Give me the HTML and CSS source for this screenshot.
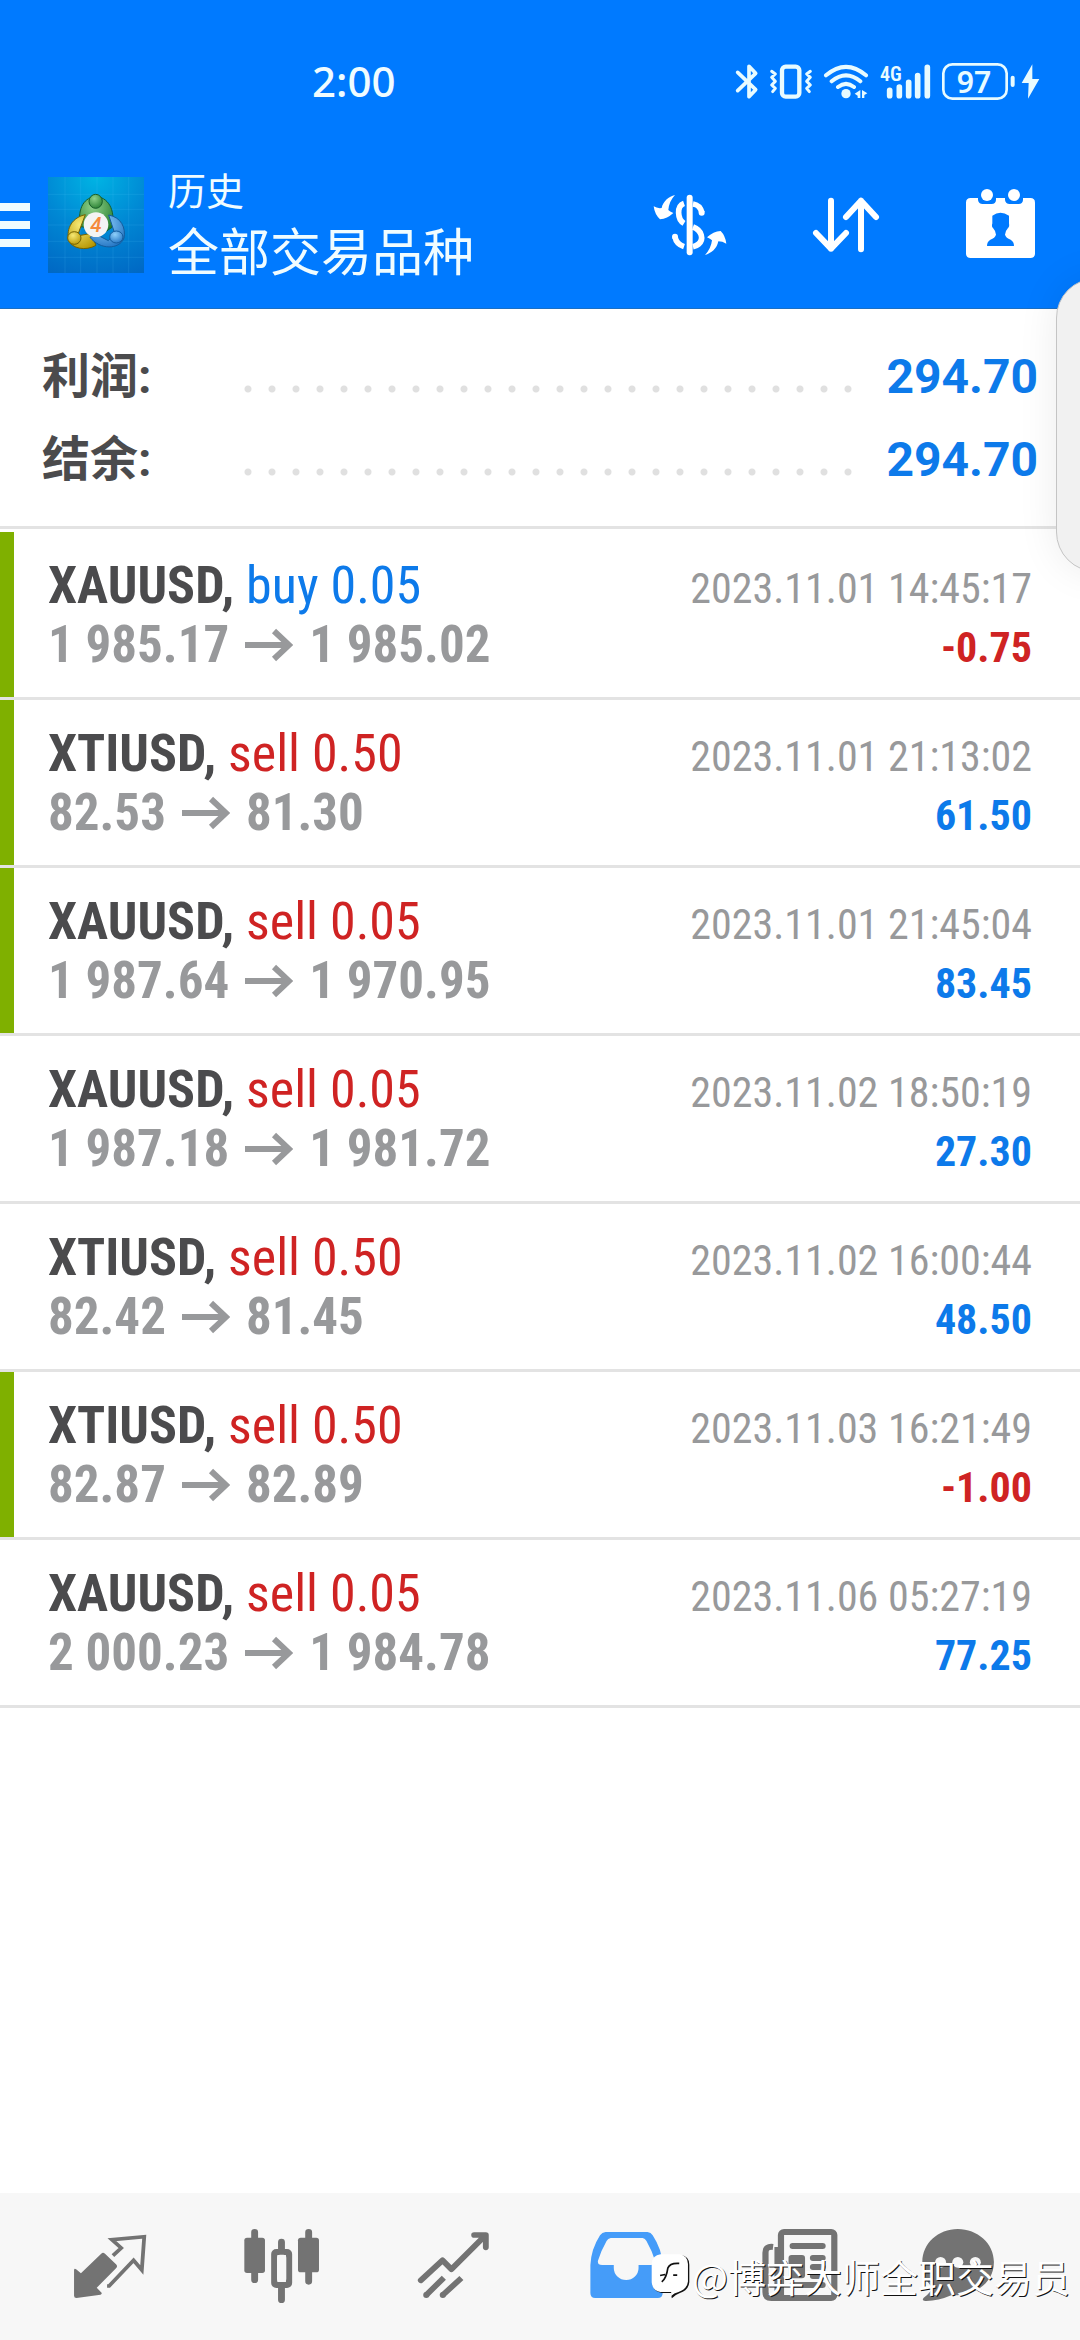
FILE: index.html
```
<!DOCTYPE html>
<html lang="zh-CN">
<head>
<meta charset="utf-8">
<meta name="viewport" content="width=device-width, initial-scale=1">
<title>历史</title>
<link rel="stylesheet" href="styles.css">
</head>
<body>
<svg width="0" height="0" class="defs" aria-hidden="true">
  <symbol id="arrow" viewBox="0 0 48 34"><path d="M0 17H43M29 3L44 17L29 31" fill="none" stroke="currentColor" stroke-width="6"/></symbol>
</svg>
<div class="screen">
  <header class="top">
    <div class="status">
      <span class="clock">2:00</span>
      <svg class="status-icons" viewBox="96 60 930 120" aria-hidden="true">
        <g fill="none" stroke="#e8fbff" stroke-width="11" stroke-linecap="round" stroke-linejoin="round">
          <path d="M113 94L167 146L147 167V76L167 97L113 149"/>
          <rect x="246" y="77" width="52" height="90" rx="11" stroke-width="13"/>
          <path d="M215 91L226 99L215 109L226 121L215 132L226 142L218 152M331 91L320 99L331 109L320 121L331 132L320 142L328 152" stroke-width="9"/>
          <path d="M378 103Q438 52 498 103M395 121Q438 85 481 121M414 138Q438 119 462 138" stroke-width="12"/>
          <path d="M569 148V164M598 138V164M626 124V164M653 104V164M682 79V164" stroke-width="17"/>
          <rect x="730" y="70" width="190" height="103" rx="27" stroke-width="8"/>
          <path d="M938 110V132" stroke-width="12"/>
        </g>
        <g fill="#e8fbff">
          <circle cx="438" cy="158" r="14"/>
          <path d="M481 147V171H473V164L464 158ZM486 147L502 157L493 162V171H486Z"/>
          <path d="M997 70L965 126H986L984 173L1018 114H997Z"/>
          <text x="540" y="119" class="net">4G</text>
          <text x="822" y="156" class="level">97</text>
        </g>
      </svg>
    </div>
    <div class="appbar">
      <button class="menu" aria-label="菜单"><i></i><i></i><i></i></button>
      <svg class="logo" viewBox="24 21 288 288" aria-hidden="true">
        <defs>
          <radialGradient id="sky" cx=".5" cy="0" r="1.1"><stop offset="0" stop-color="#00b4e4"/><stop offset=".5" stop-color="#0088d4"/><stop offset="1" stop-color="#0068c4"/></radialGradient>
          <radialGradient id="gr" cx=".4" cy=".3" r=".8"><stop offset="0" stop-color="#8fd18a"/><stop offset="1" stop-color="#217a2c"/></radialGradient>
          <radialGradient id="ye" cx=".4" cy=".3" r=".8"><stop offset="0" stop-color="#f5e873"/><stop offset="1" stop-color="#b49400"/></radialGradient>
          <radialGradient id="bl" cx=".4" cy=".3" r=".8"><stop offset="0" stop-color="#8fd0fb"/><stop offset="1" stop-color="#1c6fc0"/></radialGradient>
        </defs>
        <rect x="24" y="21" width="288" height="288" fill="url(#sky)"/>
        <path d="M24 73H312M24 118H312M24 165H312M24 214H312M24 262H312M75 21V309M122 21V309M171 21V309M219 21V309M266 21V309" stroke="#5cc8ff" stroke-opacity=".22" stroke-width="2"/>
        <g stroke-width="3">
          <path d="M120 170C112 110 135 82 167 80C202 80 228 118 216 172L198 184L186 135L150 135L138 172Z" fill="url(#gr)" stroke="#185f2b"/>
          <path d="M136 134C98 142 78 174 86 210C94 236 138 244 168 226L154 190L112 198Z" fill="url(#ye)" stroke="#746200"/>
          <path d="M206 135C244 142 258 174 252 204C238 240 180 240 150 202L168 193L205 212L224 190Z" fill="url(#bl)" stroke="#145c9d"/>
          <ellipse cx="167" cy="94" rx="20" ry="21" fill="url(#gr)" stroke="#185f2b"/>
          <ellipse cx="103" cy="204" rx="20" ry="19" fill="url(#ye)" stroke="#746200"/>
          <ellipse cx="229" cy="201" rx="20" ry="18" fill="url(#bl)" stroke="#145c9d"/>
        </g>
        <circle cx="168" cy="164" r="37" fill="#f4f4f4"/>
        <text x="168" y="186" class="four">4</text>
      </svg>
      <div class="titles">
        <h1>历史</h1>
        <p>全部交易品种</p>
      </div>
      <div class="actions">
        <button aria-label="货币"><svg viewBox="66 51 288 288">
          <path d="M209 113V277" stroke="#fff" stroke-width="18" stroke-linecap="round" fill="none"/>
          <path d="M192 130C169 138 172 178 192 190M219 132C233 134 241 140 246 158M165 231C168 246 177 255 192 260M219 201C246 211 252 238 236 252Q229 258 219 260" stroke="#fff" stroke-width="17" fill="none"/>
          <circle cx="245" cy="158" r="9" fill="#fff"/><circle cx="165" cy="230" r="9" fill="#fff"/>
          <path d="M165 105C146 110 129 124 125 144Q112 146 101 139Q104 163 120 178Q142 176 160 159Q149 155 145 150Q147 124 165 105Z" fill="#fff"/>
          <path d="M255 285C274 280 291 266 295 244Q307 244 319 251Q316 227 302 213Q280 214 261 232Q271 236 276 241Q273 266 255 285Z" fill="#fff"/>
        </svg></button>
        <button aria-label="排序"><svg viewBox="531 51 288 288">
          <path d="M633 122V266M588 219L633 266L678 219M723 268V122M678 171L723 122L768 171" fill="none" stroke="#fff" stroke-width="18" stroke-linecap="round" stroke-linejoin="round"/>
        </svg></button>
        <button aria-label="日期"><svg viewBox="996 51 288 288">
          <path d="M1052 114H1074V120Q1076 132 1088 132H1115Q1127 132 1128 120V114H1155V120Q1157 132 1169 132H1196Q1208 132 1209 120V114H1231Q1245 114 1245 128V280Q1245 294 1231 294H1052Q1038 294 1038 280V128Q1038 114 1052 114Z" fill="#fff"/>
          <circle cx="1101" cy="105" r="18" fill="#fff"/><circle cx="1182" cy="105" r="18" fill="#fff"/>
          <path d="M1117 167Q1141 150 1167 167V190Q1169 201 1164 204Q1155 214 1155 224Q1158 234 1172 239Q1182 245 1182 258H1101Q1101 245 1111 239Q1125 234 1128 224Q1128 214 1119 204Q1114 201 1117 190Z" fill="#007aff"/>
        </svg></button>
      </div>
    </div>
  </header>

  <main>
    <dl class="summary">
      <div><dt>利润:</dt><dd class="dots"></dd><dd class="total">294.70</dd></div>
      <div><dt>结余:</dt><dd class="dots"></dd><dd class="total">294.70</dd></div>
    </dl>
    <ul class="deals">
      <li class="marked"><p class="deal"><b>XAUUSD,</b> <span class="buy">buy 0.05</span></p><time>2023.11.01 14:45:17</time>
        <p class="prices">1 985.17<svg><use href="#arrow"/></svg>1 985.02</p><p class="result sell">-0.75</p></li>
      <li class="marked"><p class="deal"><b>XTIUSD,</b> <span class="sell">sell 0.50</span></p><time>2023.11.01 21:13:02</time>
        <p class="prices">82.53<svg><use href="#arrow"/></svg>81.30</p><p class="result buy">61.50</p></li>
      <li class="marked"><p class="deal"><b>XAUUSD,</b> <span class="sell">sell 0.05</span></p><time>2023.11.01 21:45:04</time>
        <p class="prices">1 987.64<svg><use href="#arrow"/></svg>1 970.95</p><p class="result buy">83.45</p></li>
      <li><p class="deal"><b>XAUUSD,</b> <span class="sell">sell 0.05</span></p><time>2023.11.02 18:50:19</time>
        <p class="prices">1 987.18<svg><use href="#arrow"/></svg>1 981.72</p><p class="result buy">27.30</p></li>
      <li><p class="deal"><b>XTIUSD,</b> <span class="sell">sell 0.50</span></p><time>2023.11.02 16:00:44</time>
        <p class="prices">82.42<svg><use href="#arrow"/></svg>81.45</p><p class="result buy">48.50</p></li>
      <li class="marked"><p class="deal"><b>XTIUSD,</b> <span class="sell">sell 0.50</span></p><time>2023.11.03 16:21:49</time>
        <p class="prices">82.87<svg><use href="#arrow"/></svg>82.89</p><p class="result sell">-1.00</p></li>
      <li><p class="deal"><b>XAUUSD,</b> <span class="sell">sell 0.05</span></p><time>2023.11.06 05:27:19</time>
        <p class="prices">2 000.23<svg><use href="#arrow"/></svg>1 984.78</p><p class="result buy">77.25</p></li>
    </ul>
  </main>

  <nav class="tabs">
    <button aria-label="行情"><svg viewBox="180 84 279 288" preserveAspectRatio="none">
      <path d="M328 197L352 174L325 149L419 140L412 240L388 211L317 288H311" fill="none" stroke="#737373" stroke-width="11"/>
      <path d="M294 191Q299 186 305 191L337 223Q343 229 337 235L281 293L295 308Q297 312 292 314L222 324Q215 324 215 317V240Q216 234 221 238L235 250Z" fill="#737373"/>
    </svg></button>
    <button aria-label="图表"><svg viewBox="679 84 279 288" preserveAspectRatio="none">
      <path d="M739 127V269M817 156V190M817 290V329M896 127V274" stroke="#737373" stroke-width="20" stroke-linecap="round"/>
      <rect x="709" y="143" width="60" height="106" rx="8" fill="#737373"/><rect x="865" y="143" width="61" height="104" rx="8" fill="#737373"/>
      <rect x="796" y="186" width="43" height="99" rx="6" fill="#f7f7f7" stroke="#737373" stroke-width="18"/>
      <rect x="804" y="194" width="27" height="82" rx="9" fill="#f7f7f7"/>
    </svg></button>
    <button aria-label="交易"><svg viewBox="1179 84 279 288" preserveAspectRatio="none">
      <path d="M1222 271L1285 211L1311 238L1410 136M1377 135H1411V172" fill="none" stroke="#737373" stroke-width="17" stroke-linecap="round" stroke-linejoin="round"/>
      <path d="M1238 315L1289 263M1286 315L1340 264" fill="none" stroke="#737373" stroke-width="17"/>
      <circle cx="1238" cy="315" r="9" fill="#737373"/><circle cx="1286" cy="315" r="9" fill="#737373"/>
    </svg></button>
    <button aria-label="历史" aria-current="page"><svg viewBox="110 84 279 288" preserveAspectRatio="none">
      <path fill-rule="evenodd" d="M190 126H312Q322 127 327 136Q354 178 356 225V309Q356 324 342 324H160Q146 324 146 309V225Q148 178 174 136Q180 127 190 126ZM205 144Q197 145 193 153Q177 182 168 212Q166 225 180 225H214V234A36 36 0 0 0 286 234V225H322Q336 225 334 212Q325 182 309 153Q305 145 298 144Z" fill="#459cf9"/>
    </svg></button>
    <button aria-label="新闻"><svg viewBox="610 84 279 288" preserveAspectRatio="none">
      <rect x="700" y="126" width="155" height="198" rx="9" fill="none" stroke="#737373" stroke-width="18"/>
      <path d="M677 171Q655 168 655 188V306Q655 324 672 324H700Q690 318 690 306V171" fill="none" stroke="#737373" stroke-width="18"/>
      <path d="M734 168H821M793 204H821M793 231H821M793 258H821M734 285H821" stroke="#737373" stroke-width="18" stroke-linecap="round"/>
      <rect x="722" y="195" width="48" height="70" rx="9" fill="#737373"/>
    </svg></button>
    <button aria-label="消息"><svg viewBox="1109 84 279 288" preserveAspectRatio="none">
      <path d="M1213 117C1270 117 1318 160 1318 216C1318 282 1260 318 1194 316Q1154 334 1118 333Q1107 331 1114 323Q1136 308 1138 292Q1110 262 1110 216C1110 160 1156 117 1213 117Z" fill="#737373"/>
      <circle cx="1163" cy="217" r="16" fill="#f7f7f7"/><circle cx="1213" cy="217" r="16" fill="#f7f7f7"/><circle cx="1264" cy="217" r="16" fill="#f7f7f7"/>
    </svg></button>
  </nav>

  <aside class="edge-panel"></aside>
  <div class="watermark">
    <svg viewBox="30 118 116 134" aria-hidden="true">
      <path d="M62 121H118Q144 124 144 150V202Q142 226 116 234Q104 238 92 250Q90 244 92 234H62Q36 230 34 204V148Q38 124 62 121Z" fill="#111"/>
      <path d="M58 119H114Q139 122 140 148V200Q138 222 112 231Q98 234 90 243V231H58Q34 228 32 202V146Q35 122 58 119Z" fill="#fff"/>
      <path d="M57 182L72 179M62 201Q76 190 80 160Q86 144 114 146M96 181H108" fill="none" stroke="#111" stroke-width="5"/>
    </svg>
    <span>@博弈大师全职交易员</span>
  </div>
</div>
</body>
</html>
```
FILE: styles.css
```
* { box-sizing: border-box; margin: 0; padding: 0; }

body {
  background: #fff;
  color: #4b4b4d;
  font-family: "Roboto", "Noto Sans CJK SC", sans-serif;
}

button { background: none; border: 0; }
svg { display: block; }
.defs { position: absolute; }

.screen {
  position: relative;
  display: flex;
  flex-direction: column;
  min-height: 100vh;
  overflow: hidden;
}

/* Header */
.top {
  background: #007aff;
  color: #f0fcff;
  border-bottom: 1px solid #1a6fc4;
}
.status {
  display: flex;
  align-items: center;
  justify-content: space-between;
  height: 141px;
  padding: 20px 38px 0 312px;
}
.clock { font: 500 42px/48px "Noto Sans", sans-serif; }
.status-icons { width: 310px; height: 40px; }
.net { font: 600 60px "Roboto Condensed", sans-serif; }
.level { font: 600 90px "Noto Sans", sans-serif; text-anchor: middle; }

.appbar {
  display: flex;
  align-items: center;
  height: 167px;
  padding-right: 32px;
}
.menu {
  display: flex;
  flex-direction: column;
  gap: 10px;
  width: 30px;
  margin-right: 18px;
}
.menu i { height: 8px; background: #f0fcff; }
.logo { width: 96px; height: 96px; }
.four { font: italic 500 62px "Roboto", sans-serif; fill: #f58a3c; text-anchor: middle; }
.titles { flex: 1; padding: 6px 0 0 24px; }
.titles h1 { font-size: 38px; font-weight: 400; line-height: 52px; }
.titles p { font-size: 51px; line-height: 72px; }
.actions { display: flex; gap: 59px; }
.actions button, .actions svg { width: 96px; height: 96px; }

/* Totals */
.summary {
  padding: 26px 42px 25px 42px;
  border-bottom: 3px solid #e3e3e3;
  font-weight: 700;
}
.summary div {
  display: flex;
  align-items: center;
  height: 83px;
}
.summary dt { width: 194px; font-size: 48px; line-height: 83px; }
.dots {
  flex: 1;
  height: 8px;
  margin: 24px 28px 0 0;
  background: radial-gradient(circle at 12px 4px, #e0e0e0 3px, transparent 4px) 0 0 / 24px 8px repeat-x;
}
.total { color: #0d7aea; font-size: 48px; }

/* Deals */
.deals { padding-top: 3px; list-style: none; }
.deals li {
  display: grid;
  grid-template-columns: 1fr auto;
  align-items: baseline;
  padding: 24px 48px 23px;
  border-bottom: 3px solid #e3e3e3;
  font-family: "Roboto Condensed", "Roboto", sans-serif;
  font-size: 52px;
  line-height: 59px;
}
.deals .marked { box-shadow: inset 14px 0 #7fb000; }
.deals time,
.result { font-size: 42px; line-height: 50px; }
.deals time { color: #98999b; }
.prices {
  display: flex;
  align-items: center;
  gap: 16px;
  color: #98999b;
  font-size: 51px;
  font-weight: 700;
}
.prices svg { width: 48px; height: 34px; }
.result { font-weight: 700; text-align: right; }
.buy { color: #0d7aea; }
.sell { color: #cf2323; }

/* Bottom tabs */
.tabs {
  display: flex;
  margin-top: auto;
  padding: 25px 24px 26px;
  background: #f7f7f7;
}
.tabs button { flex: 1; display: flex; justify-content: center; }
.tabs svg { width: 96px; height: 96px; }

/* Overlays */
.edge-panel {
  position: absolute;
  top: 278px;
  right: -60px;
  width: 84px;
  height: 294px;
  border: 1px solid #c4c4c4;
  border-radius: 40px;
  background: #f1f1f1;
  box-shadow: 0 0 40px rgba(0, 0, 0, .08);
}
.watermark {
  position: absolute;
  right: 10px;
  bottom: 36px;
  display: flex;
  align-items: center;
  gap: 2px;
  color: #fff;
  font: 400 38px/56px "Noto Sans CJK SC", sans-serif;
  text-shadow: 1px 1px 0 #111;
}
.watermark svg { width: 39px; height: 45px; }
```
